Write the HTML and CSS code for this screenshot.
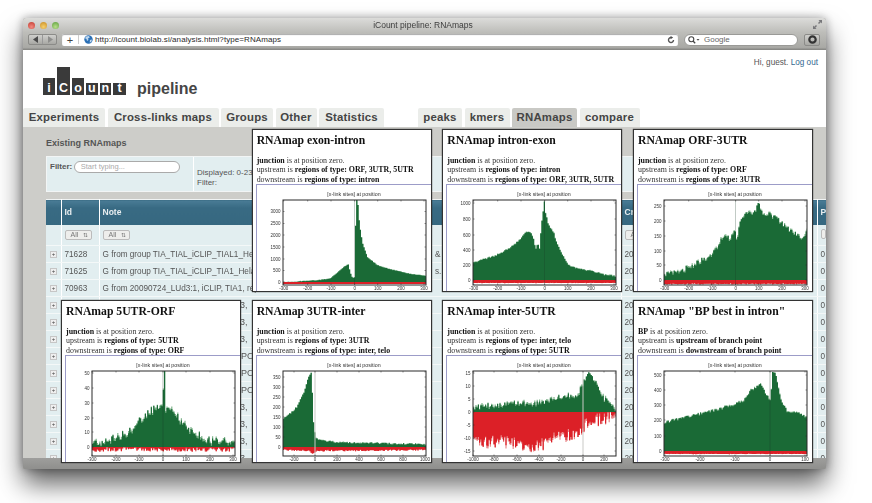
FILE: index.html
```html
<!DOCTYPE html>
<html lang="en">
<head>
<meta charset="utf-8">
<title>iCount pipeline: RNAmaps</title>
<link rel="stylesheet" href="styles.css">
</head>
<body>
<div class="desktop">
  <div class="window">
    <header class="chrome">
      <div class="titlebar">
        <div class="lights"><i class="light red"></i><i class="light amber"></i><i class="light green"></i></div>
        <div class="wintitle">iCount pipeline: RNAmaps</div>
        <svg class="fullscreen" width="9" height="9" viewBox="0 0 9 9"><path d="M9 0v3.5L7.8 2.3 6 4 5 3l1.700-1.800L5.500 0zM0 9V5.500l1.200 1.200L3 5l1 1-1.700 1.800L3.500 9z"/></svg>
      </div>
      <div class="toolbar">
        <div class="navbtns">
          <span class="navbtn"><svg width="6" height="7" viewBox="0 0 6 7"><path class="ico-dark" d="M5 0v7L0 3.500z"/></svg></span>
          <span class="navbtn"><svg width="6" height="7" viewBox="0 0 6 7"><path class="ico-light" d="M1 0v7l5-3.500z"/></svg></span>
        </div>
        <div class="urlbar">
          <span class="plus">+</span>
          <svg class="globe" width="9" height="9" viewBox="0 0 9 9"><circle class="globe-sea" cx="4.500" cy="4.500" r="4.200"/><path class="globe-land" d="M2 1.500 5 1l.8 1.500L4 3.500 4.500 5 3 6 2.500 4 1 3.300zM6 5l2-.6-.8 2.600-1.500.6z"/></svg>
          <span class="url">http://icount.biolab.si/analysis.html?type=RNAmaps</span>
          <svg class="reload" width="8" height="8" viewBox="0 0 8 8"><path d="M6.500 4A2.500 2.500 0 1 1 4 1.500" fill="none" stroke="#555" stroke-width="1.400"/><path class="ico-dark" d="M3.600 0l2.600 1.600-2.600 1.600z"/></svg>
        </div>
        <div class="search">
          <svg width="12" height="8" viewBox="0 0 12 8"><circle cx="3.300" cy="3.200" r="2.500" fill="none" stroke="#444" stroke-width="1.100"/><path d="M5 5l2.200 2.300" stroke="#444" stroke-width="1.300"/><path class="ico-dark" d="M8.500 3h3L10 4.800z"/></svg>
          <span>Google</span>
        </div>
        <span class="toolbtn"><svg width="9" height="9" viewBox="0 0 9 9"><circle cx="4.500" cy="4.500" r="3.200" fill="none" stroke="#333" stroke-width="2.200"/></svg></span>
      </div>
    </header>

    <div class="page">
      <div class="masthead">
        <div class="logo">
          <div class="bars">
            <span class="bar bar-i">i</span><span class="bar bar-c">C</span><span class="bar bar-o">o</span><span class="bar bar-u">u</span><span class="bar bar-n">n</span><span class="bar bar-t">t</span>
          </div>
          <span class="pipeline">pipeline</span>
        </div>
        <div class="user">Hi, guest. <a class="logout">Log out</a></div>
      </div>
      <nav class="tabs">
        <div class="tabgroup tabgroup-main">
          <span class="tab tab-exp">Experiments</span><span class="tab tab-cross">Cross-links maps</span><span class="tab tab-groups">Groups</span><span class="tab tab-other">Other</span><span class="tab tab-stats">Statistics</span>
        </div>
        <div class="tabgroup">
          <span class="tab tab-peaks">peaks</span><span class="tab tab-kmers">kmers</span><span class="tab tab-active">RNAmaps</span><span class="tab tab-compare">compare</span>
        </div>
      </nav>
    </div>

    <main class="panel">
      <h2 class="heading">Existing RNAmaps</h2>
      <div class="filterbox">
        <div class="filtercell">
          <b class="filterlabel">Filter:</b>
          <span class="filterinput">Start typing...</span>
        </div>
        <div class="displaycell">Displayed: 0-23<br>Filter:</div>
      </div>
      <div class="tablewrap">
        <table class="data">
          <colgroup><col class="c-h"><col class="c-id"><col class="c-note"><col class="c-a"><col class="c-b"><col class="c-d"><col class="c-p"></colgroup>
          <thead>
            <tr class="head"><th></th><th>Id</th><th class="open">Note</th><th class="open"></th><th></th><th>Created</th><th>P</th></tr>
            <tr class="filters">
              <td></td><td><span class="sel">All<i>&#8645;</i></span></td><td class="open"><span class="sel">All<i>&#8645;</i></span></td><td class="open"></td><td></td><td><span class="sel">All<i>&#8645;</i></span></td><td><span class="sel sel-cut"></span></td>
            </tr>
          </thead>
          <tbody>
            <tr><td><i class="expand">+</i></td><td>71628</td><td class="open">G from group TIA_TIAL_iCLIP_TIAL1_Hela_comparison</td><td class="open"></td><td>&amp; S</td><td>2012</td><td>0</td></tr>
            <tr><td><i class="expand">+</i></td><td>71625</td><td class="open">G from group TIA_TIAL_iCLIP_TIA1_Hela_comparison</td><td class="open"></td><td>s.:</td><td>2012</td><td>0</td></tr>
            <tr><td><i class="expand">+</i></td><td>70963</td><td class="open">G from 20090724_LUd3:1, iCLIP, TIA1, replicate</td><td class="open"></td><td></td><td>2012</td><td>0</td></tr>
            <tr><td><i class="expand">+</i></td><td></td><td class="open"></td><td class="open side">13,</td><td></td><td>2012</td><td>0</td></tr>
            <tr><td><i class="expand">+</i></td><td></td><td class="open"></td><td class="open side">13,</td><td></td><td>2012</td><td>0</td></tr>
            <tr><td><i class="expand">+</i></td><td></td><td class="open"></td><td class="open side">13,</td><td></td><td>2012</td><td>0</td></tr>
            <tr><td><i class="expand">+</i></td><td></td><td class="open"></td><td class="open side">APC</td><td></td><td>2012</td><td>0</td></tr>
            <tr><td><i class="expand">+</i></td><td></td><td class="open"></td><td class="open side">APC</td><td></td><td>2012</td><td>0</td></tr>
            <tr><td><i class="expand">+</i></td><td></td><td class="open"></td><td class="open side">APC</td><td></td><td>2012</td><td>0</td></tr>
            <tr><td><i class="expand">+</i></td><td></td><td class="open"></td><td class="open side">13,</td><td></td><td>2012</td><td>0</td></tr>
            <tr><td><i class="expand">+</i></td><td></td><td class="open"></td><td class="open side">13,</td><td></td><td>2012</td><td>0</td></tr>
            <tr><td><i class="expand">+</i></td><td></td><td class="open"></td><td class="open side">13,</td><td></td><td>2012</td><td>0</td></tr>
            <tr><td><i class="expand">+</i></td><td></td><td class="open"></td><td class="open side">13,</td><td></td><td>2012</td><td>0</td></tr>
          </tbody>
        </table>
      </div>
    </main>
    <div class="statusbar"></div>

    <div class="popups">
      <section class="popup popup-first">
        <h3>RNAmap exon-intron</h3>
        <p><b>junction</b> is at position zero.<br>upstream is <b>regions of type: ORF, 3UTR, 5UTR</b><br>downstream is <b>regions of type: intron</b></p>
        <div class="frame"><svg class="chart" data-chart="c1" width="176" height="110" viewBox="0 0 176 110"></svg></div>
      </section>
      <section class="popup">
        <h3>RNAmap intron-exon</h3>
        <p><b>junction</b> is at position zero.<br>upstream is <b>regions of type: intron</b><br>downstream is <b>regions of type: ORF, 3UTR, 5UTR</b></p>
        <div class="frame"><svg class="chart" data-chart="c2" width="176" height="110" viewBox="0 0 176 110"></svg></div>
      </section>
      <section class="popup">
        <h3>RNAmap ORF-3UTR</h3>
        <p><b>junction</b> is at position zero.<br>upstream is <b>regions of type: ORF</b><br>downstream is <b>regions of type: 3UTR</b></p>
        <div class="frame"><svg class="chart" data-chart="c3" width="176" height="110" viewBox="0 0 176 110"></svg></div>
      </section>
      <section class="popup">
        <h3>RNAmap 5UTR-ORF</h3>
        <p><b>junction</b> is at position zero.<br>upstream is <b>regions of type: 5UTR</b><br>downstream is <b>regions of type: ORF</b></p>
        <div class="frame"><svg class="chart" data-chart="c4" width="176" height="110" viewBox="0 0 176 110"></svg></div>
      </section>
      <section class="popup">
        <h3>RNAmap 3UTR-inter</h3>
        <p><b>junction</b> is at position zero.<br>upstream is <b>regions of type: 3UTR</b><br>downstream is <b>regions of type: inter, telo</b></p>
        <div class="frame"><svg class="chart" data-chart="c5" width="176" height="110" viewBox="0 0 176 110"></svg></div>
      </section>
      <section class="popup">
        <h3>RNAmap inter-5UTR</h3>
        <p><b>junction</b> is at position zero.<br>upstream is <b>regions of type: inter, telo</b><br>downstream is <b>regions of type: 5UTR</b></p>
        <div class="frame"><svg class="chart" data-chart="c6" width="176" height="110" viewBox="0 0 176 110"></svg></div>
      </section>
      <section class="popup">
        <h3>RNAmap "BP best in intron"</h3>
        <p><b>BP</b> is at position zero.<br>upstream is <b>upstream of branch point</b><br>downstream is <b>downstream of branch point</b></p>
        <div class="frame"><svg class="chart" data-chart="c7" width="176" height="110" viewBox="0 0 176 110"></svg></div>
      </section>
    </div>
  </div>
</div>
<script src="charts.js"></script>
</body>
</html>
```

FILE: styles.css
```css
* { box-sizing: border-box; }
html, body { margin: 0; padding: 0; background: #fff; }
.desktop {
  width: 872px; height: 503px; overflow: hidden; padding: 18px 0 0 23px;
  filter: blur(.45px);
  font-family: "Liberation Sans", Arial, sans-serif;
}
.window {
  position: relative; width: 803px; height: 451px;
  display: flex; flex-direction: column;
  border-radius: 3px 3px 2px 2px;
  box-shadow: 0 15px 26px rgba(0,0,0,.62), 0 0 10px rgba(0,0,0,.35);
  background: #9a9a98;
}
/* browser chrome */
.chrome {
  height: 32px; flex: none; border-radius: 3px 3px 0 0;
  background: linear-gradient(#dcdcda, #bdbdb9 45%, #a9a9a5 92%, #82827f);
}
.titlebar { height: 13px; display: flex; align-items: center; position: relative; padding: 1px 4px 0 5px; }
.lights { display: flex; gap: 5px; }
.light { width: 7px; height: 7px; border-radius: 50%; display: block; }
.red { background: radial-gradient(circle at 50% 70%, #f38a80, #c0392f); }
.amber { background: radial-gradient(circle at 50% 70%, #f5d070, #c98a1e); }
.green { background: radial-gradient(circle at 50% 70%, #b9e08a, #5a9c3c); }
.wintitle { flex: 1; text-align: center; font-size: 8.500px; color: #3d3d3d; padding-right: 26px; }
.fullscreen { fill: #77777a; margin-top: -2px; }
.toolbar { display: flex; align-items: center; height: 13px; padding-left: 5px; margin-top: 2px; }
.navbtns { display: flex; width: 29px; height: 11px; border: 1px solid #8b8b88; border-radius: 2px; background: linear-gradient(#cfcfcc, #a8a8a4); }
.navbtn { flex: 1; display: flex; align-items: center; justify-content: center; border-right: 1px solid #999; }
.navbtn:last-child { border-right: 0; }
.ico-dark { fill: #4a4a4a; }
.ico-light { fill: #8e8e8c; }
.urlbar {
  width: 616px; height: 12px; margin-left: 5px; display: flex; align-items: center;
  background: #fff; border-radius: 2px; box-shadow: inset 0 1px 1px #aaa;
}
.plus { width: 17px; font-size: 11px; color: #444; border-right: 1px solid #ccc; height: 9px; display: flex; align-items: center; justify-content: center; }
.globe { margin-left: 5px; }
.globe-sea { fill: #2a6fb5; }
.globe-land { fill: #bcd6ee; }
.url { font-size: 8px; color: #2a2a2a; margin-left: 2px; flex: 1; letter-spacing: .08px; }
.reload { margin-right: 3px; }
.search {
  width: 114px; height: 12px; margin-left: 6px; padding-left: 3px; display: flex; align-items: center; gap: 4px;
  background: #fff; border-radius: 6px; border: 1px solid #9a9a97; font-size: 8px; color: #666;
}
.toolbtn { width: 16px; height: 12px; margin-left: 6px; border: 1px solid #8b8b88; border-radius: 2px; background: linear-gradient(#cfcfcc, #a8a8a4); display: flex; align-items: center; justify-content: center; }
/* page head */
.page { background: #fff; height: 77px; flex: none; display: flex; flex-direction: column; }
.masthead { flex: 1; display: flex; justify-content: space-between; padding: 0 8px 0 20px; }
.logo { display: flex; align-items: flex-end; margin-top: 17px; height: 28px; }
.bars { display: flex; align-items: flex-end; gap: 2px; }
.bar {
  display: flex; align-items: flex-end; justify-content: center; width: 12px; background: #3a3a3a; color: #fff;
  font-weight: 700; font-size: 12.500px; line-height: 14px;
}
.bar-i, .bar-o { height: 17px; }
.bar-c { height: 28px; width: 13px; }
.bar-u, .bar-n { height: 12px; width: 11.500px; }
.bar-t { height: 12px; width: 13px; }
.pipeline { font-size: 16px; font-weight: 700; color: #454545; margin-left: 11px; line-height: 18px; margin-bottom: -3px; }
.user { font-size: 8.200px; color: #555; margin-top: 8px; }
.logout { color: #33688f; }
.tabs { display: flex; height: 19px; flex: none; }
.tabgroup { display: flex; gap: 2.500px; }
.tabgroup-main { width: 395px; }
.tab {
  background: #ebedea; border-radius: 2px 2px 0 0; line-height: 19px; text-align: center;
  font-size: 11.400px; font-weight: 700; color: #444; letter-spacing: .2px;
}
.tab-exp { width: 82px; } .tab-cross { width: 111px; } .tab-groups { width: 52px; } .tab-other { width: 41px; } .tab-stats { width: 65px; }
.tab-peaks { width: 44px; } .tab-kmers { width: 45px; } .tab-active { width: 65px; background: #c9c9c5; } .tab-compare { width: 60px; }
/* main panel */
.panel { flex: none; height: 331px; background: #cdcdc9; display: flex; flex-direction: column; padding-left: 23px; }
.heading { margin: 0; font-size: 9px; line-height: 12px; color: #555; padding-top: 10px; height: 29px; }
.filterbox { display: flex; width: 740px; height: 36px; background: #e2eef0; border: 1px solid #f2f5f5; font-size: 8px; color: #555; flex: none; }
.filtercell { width: 147px; padding: 4px 0 0 3px; display: flex; gap: 1.500px; border-right: 1px solid #fff; align-items: flex-start; }
.filterlabel { line-height: 11px; }
.filterinput { width: 106px; height: 12px; border: 1px solid #aaa; border-radius: 6px; background: #fff; color: #aaa; font-size: 7.500px; line-height: 10px; padding-left: 6px; }
.displaycell { padding: 11px 0 0 3px; line-height: 10px; }
.tablewrap { flex: 1; margin-top: 7px; overflow: hidden; }
.data { border-collapse: collapse; table-layout: fixed; width: 780px; font-size: 8.200px; color: #555; }
.c-h { width: 15px; } .c-id { width: 38px; } .c-note { width: 136px; } .c-a { width: 197px; }
.c-b { width: 189px; } .c-d { width: 196px; } .c-p { width: 9px; }
.data th, .data td { border-right: 1px solid #fff; padding: 0 0 0 3px; white-space: nowrap; overflow: visible; text-align: left; }
.data .open { border-right: 0; }
.data td { border-bottom: 1px solid #f4f8f8; background: #e2eef0; height: 17px; }
.head th { height: 25px; border-top: 1px solid #f0f3f3; color: #e8eef0; font-size: 8.500px; background: linear-gradient(#4a7c96, #386a83 30%, #366880); }
.filters td { height: 21px; }
.sel {
  display: inline-flex; align-items: center; justify-content: space-between; width: 27px; height: 10px; padding: 0 3px 0 5px;
  border: 1px solid #bbb; border-radius: 2px; background: #eeeeec; font-size: 7px; color: #777;
}
.sel-cut { width: 5px; padding: 0; }
.sel i { font-style: normal; font-size: 6px; }
.expand { display: block; width: 7px; height: 7px; margin-left: 1px; border: 1px solid #c6c6c6; background: #efefef; font-style: normal; font-size: 6px; line-height: 5px; text-align: center; color: #444; }
.data .side { font-size: 9px; padding-left: 0; }
.statusbar { flex: 1; background: linear-gradient(#9e9e9c, #8f8f8d); border-radius: 0 0 2px 2px; }
/* RNA map popups */
.popups {
  position: absolute; left: 38px; top: 111px;
  display: grid; grid-template-columns: repeat(4, 180px); grid-template-rows: 163px 163px; column-gap: 10.670px; row-gap: 8px;
}
.popup {
  background: #fff; border: 1px solid #333; box-shadow: 0 0 1px #222; overflow: hidden;
  padding: 4px 0 0 4px; font-family: "Liberation Serif", "Times New Roman", serif; color: #333;
}
.popup-first { grid-column: 2; }
.popup h3 { margin: 0 0 8px; font-size: 11.700px; line-height: 14px; color: #111; font-weight: 700; white-space: nowrap; }
.popup p { margin: 0; font-size: 7.900px; line-height: 9.300px; white-space: nowrap; }
.popup b { color: #111; }
.frame { margin-left: -1px; border-top: 1px solid #9c9cc8; border-left: 1px solid #9c9cc8; width: 190px; height: 130px; background: #fff; }
.chart { display: block; }
.chart-title { font: 5.300px "Liberation Sans", Arial, sans-serif; fill: #333; text-anchor: middle; }
.tick-x { font: 4.500px "Liberation Sans", Arial, sans-serif; fill: #333; text-anchor: middle; }
.tick-y { font: 4.500px "Liberation Sans", Arial, sans-serif; fill: #333; text-anchor: end; }
.g-light { fill: #7fb48c; }
.g-dark { fill: #1a6a36; }
.r-light { fill: #e98a8c; }
.r-dark { fill: #dc2027; }
.zero { stroke: #1a3a26; stroke-width: .6; opacity: .55; }
.zero-light { stroke: #c9c9c6; stroke-width: 1; }
.plot { fill: none; stroke: #2a2a2a; stroke-width: 1; }
.tickmark { stroke: #2a2a2a; stroke-width: .5; }
```

FILE: charts.js
```js
(function () {
  var W = 143, H = 85, STEP = 1.2;
  var X300 = [["-300", .7], ["-200", 24.7], ["-100", 48], ["0", 71.7], ["100", 94.7], ["200", 118], ["300", 141]];
  var CHARTS = {
    c1: { x: X300, y: [["0", 82], ["500", 70.5], ["1000", 59], ["1500", 47], ["2000", 35], ["2500", 23.5], ["3000", 11.5]],
      zero: 82, zeroX: 71.7, noise: .5, lower: [[0, 84], [143, 84]], rnoise: 0,
      green: [[0, 82], [17, 81], [34, 80], [47, 78], [54, 72], [61, 66], [65, 64], [66.5, 72], [69, 78], [71, 77], [72.5, 0], [74, 0], [76, 25], [79, 43], [84, 57], [94, 65], [107, 69], [124, 73], [143, 76]] },
    c2: { x: X300, y: [["0", 80], ["200", 65], ["400", 50], ["600", 35], ["800", 19], ["1000", 3]],
      zero: 80, zeroX: 71.7, noise: 1.4, lower: [[0, 83], [143, 83]], rnoise: .4,
      green: [[0, 62], [10, 59], [20, 56], [30, 51], [40, 45], [47, 38], [52, 32], [57, 32], [60, 38], [62, 50], [64, 43], [66, 48], [68, 23], [71, 0], [72, 13], [75, 25], [80, 32], [83, 42], [88, 53], [95, 65], [107, 69], [120, 71], [130, 74], [143, 76]] },
    c3: { x: X300, y: [["0", 80], ["50", 65], ["100", 51], ["150", 36], ["200", 21], ["250", 6]],
      zero: 80, zeroX: 71.7, noise: 5, lower: [[0, 84], [143, 84]], rnoise: 1,
      green: [[0, 74], [9, 71], [19, 69], [29, 64], [39, 59], [49, 52], [56, 40], [61, 33], [66, 39], [70, 27], [72, 39], [76, 19], [81, 13], [89, 13], [94, 2], [99, 13], [106, 14], [114, 20], [122, 27], [132, 34], [137, 37], [142, 30]] },
    c4: { x: [["-300", 0], ["-200", 24], ["-100", 47], ["0", 71], ["100", 94], ["200", 118], ["300", 141]], y: [["0", 76], ["10", 61], ["20", 47], ["30", 32], ["40", 17], ["50", 2]],
      zero: 76, zeroX: 71, noise: 8, lower: [[0, 79], [143, 79]], rnoise: 4,
      green: [[0, 72], [14, 70], [27, 65], [37, 59], [47, 49], [57, 39], [67, 37], [70.5, 37], [71, 0], [72, 0], [72.5, 37], [77, 36], [84, 44], [91, 52], [101, 60], [114, 68], [127, 69], [143, 72]] },
    c5: { x: [["-200", 11], ["0", 32], ["200", 54], ["400", 76], ["600", 98], ["800", 120], ["1000", 142]], y: [["0", 76], ["50", 66], ["100", 56], ["150", 46], ["200", 36], ["250", 26], ["300", 16], ["350", 6]],
      zero: 76, zeroX: 32, zeroLight: true, noise: 1.5, lower: [[0, 79], [25, 80], [30, 83], [33, 80], [143, 79]], rnoise: 1.5,
      green: [[0, 47], [7, 42], [13, 36], [20, 22], [25, 6], [28, 1], [30, 51], [32, 67], [37, 69], [53, 71], [100, 72], [142, 73]] },
    c6: { x: [["-1000", 0], ["-800", 21], ["-600", 44], ["-400", 66], ["-200", 88], ["0", 110], ["200", 131]], y: [["15", 2], ["10", 15], ["5", 28], ["0", 41], ["-5", 54], ["-10", 67], ["-15", 80]],
      zero: 41, zeroX: 110, zeroLight: true, noise: 6, lower: [[0, 71], [33, 72], [67, 77], [80, 67], [93, 66], [108, 59], [113, 54], [127, 49], [142, 45]], rnoise: 12,
      green: [[0, 36], [33, 32], [67, 31], [93, 24], [103, 24], [110, 11], [115, 1], [122, 9], [130, 26], [142, 36]] },
    c7: { x: [["-300", 1], ["-200", 36], ["-100", 71], ["0", 106], ["100", 141]], y: [["0", 80], ["100", 65], ["200", 49], ["300", 34], ["400", 19], ["500", 4]],
      zero: 80, zeroX: 106, noise: 2.5, lower: [[0, 83], [143, 83]], rnoise: .5,
      green: [[0, 51], [16, 47], [32, 43], [49, 39], [66, 34], [79, 29], [86, 19], [96, 13], [102, 24], [106, 29], [108, 1], [111, 2], [116, 27], [122, 39], [132, 41], [142, 46]] }
  };
  var seed = 12345;
  function rnd() { seed = (seed * 16807) % 2147483647; return seed / 2147483647; }
  function at(pts, x) {
    for (var i = 1; i < pts.length; i++) {
      if (x <= pts[i][0]) {
        var a = pts[i - 1], b = pts[i], s = b[0] === a[0] ? 1 : (x - a[0]) / (b[0] - a[0]);
        return a[1] + (b[1] - a[1]) * s;
      }
    }
    return pts[pts.length - 1][1];
  }
  function clamp(v) { return Math.max(0, Math.min(H, v)); }
  function area(base, tops) {
    var d = "M0 " + base;
    tops.forEach(function (v, i) {
      var x = i * STEP;
      d += "L" + x.toFixed(1) + " " + v.toFixed(1) + "L" + Math.min(W, x + STEP).toFixed(1) + " " + v.toFixed(1);
    });
    return d + "L" + W + " " + base + "Z";
  }
  function render(c) {
    var gl = [], gd = [], rl = [], rd = [];
    for (var i = 0; i * STEP < W; i++) {
      var x = i * STEP;
      var g = at(c.green, x), r = at(c.lower, x);
      var spike = g < 6;
      var n = spike ? 0 : (rnd() - .5) * c.noise;
      var top = clamp(g + n);
      gl.push(top);
      gd.push(Math.min(c.zero, clamp(top + (spike ? 0 : .4 + c.noise * .3 * rnd()))));
      var rn = (rnd() - .5) * c.rnoise;
      var bot = clamp(r + rn);
      rl.push(bot);
      rd.push(Math.max(c.zero, bot - c.rnoise * .3 * rnd()));
    }
    var s = '<text class="chart-title" x="97" y="11">[x-link sites] at position</text><g transform="translate(26 15)">';
    s += '<path class="g-light" d="' + area(c.zero, gl) + '"/><path class="g-dark" d="' + area(c.zero, gd) + '"/>';
    s += '<path class="r-light" d="' + area(c.zero, rl) + '"/><path class="r-dark" d="' + area(c.zero, rd) + '"/>';
    s += '<line class="' + (c.zeroLight ? "zero-light" : "zero") + '" x1="' + c.zeroX + '" x2="' + c.zeroX + '" y1="0" y2="' + H + '"/>';
    s += '<rect class="plot" x="0" y="0" width="' + W + '" height="' + H + '"/>';
    c.x.forEach(function (t) {
      s += '<line class="tickmark" x1="' + t[1] + '" x2="' + t[1] + '" y1="0" y2="1.5"/><line class="tickmark" x1="' + t[1] + '" x2="' + t[1] + '" y1="' + H + '" y2="' + (H - 1.5) + '"/>';
      s += '<text class="tick-x" x="' + t[1] + '" y="' + (H + 4.5) + '">' + t[0] + '</text>';
    });
    c.y.forEach(function (t) {
      s += '<line class="tickmark" x1="0" x2="1.5" y1="' + t[1] + '" y2="' + t[1] + '"/><line class="tickmark" x1="' + W + '" x2="' + (W - 1.5) + '" y1="' + t[1] + '" y2="' + t[1] + '"/>';
      s += '<text class="tick-y" x="-2.5" y="' + (t[1] + 1.6) + '">' + t[0] + '</text>';
    });
    return s + "</g>";
  }
  document.querySelectorAll(".chart").forEach(function (el) {
    el.innerHTML = render(CHARTS[el.getAttribute("data-chart")]);
  });
})();
```
